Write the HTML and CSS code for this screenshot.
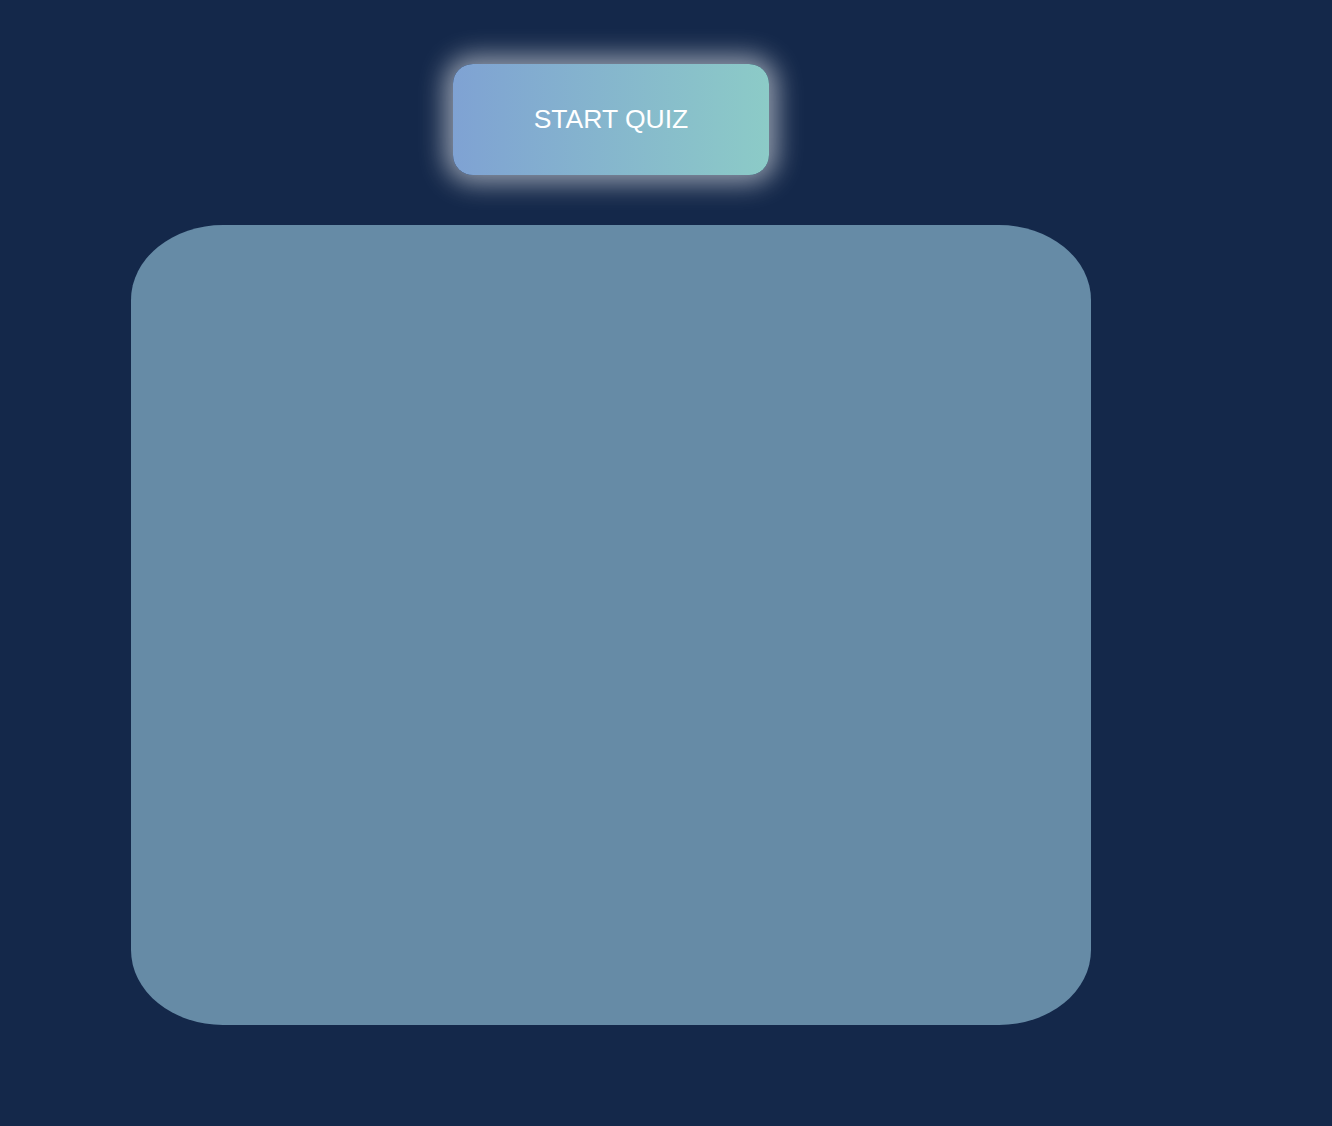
FILE: index.html
```html
<!DOCTYPE html>
<html>
<head>
<meta charset="utf-8">
<link rel="stylesheet" href="styles.css">
</head>
<body>
<main class="wrap">
  <button class="start-btn">START QUIZ</button>
  <section class="quiz-card"></section>
</main>
</body>
</html>
```
FILE: styles.css
```css
html, body {
  margin: 0;
  padding: 0;
  background: #14284a;
  height: 100%;
}
body {
  font-family: "Liberation Sans", Arial, sans-serif;
}
.wrap {
  width: 960px;
  margin-left: 131px;
  padding-top: 64px;
  display: flex;
  flex-direction: column;
  align-items: center;
  gap: 50px;
}
.start-btn {
  width: 316px;
  height: 111px;
  border: none;
  border-radius: 20px;
  background: linear-gradient(90deg, #7fa2d3 0%, #8ccbc7 100%);
  color: #ffffff;
  font-family: "Liberation Sans", Arial, sans-serif;
  font-size: 26.5px;
  box-shadow: 0 0 26px 8px rgba(255, 255, 255, 0.55);
  cursor: pointer;
}
.quiz-card {
  width: 960px;
  height: 800px;
  background: #668ba6;
  border-radius: 92px / 75px;
}
```
